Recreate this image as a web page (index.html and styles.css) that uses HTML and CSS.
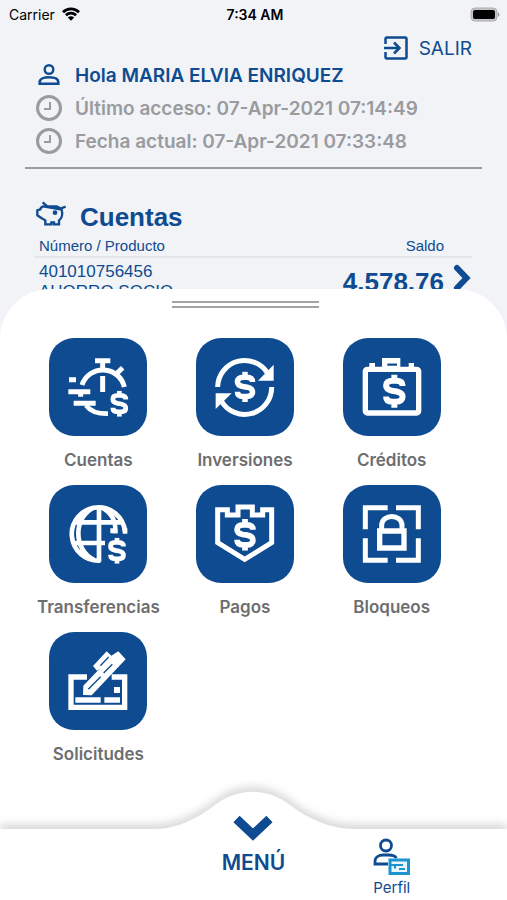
FILE: index.html
```html
<!DOCTYPE html>
<html lang="es">
<head>
<meta charset="utf-8">
<meta name="viewport" content="width=device-width, initial-scale=1">
<title>Banca móvil</title>
<link rel="stylesheet" href="styles.css">
</head>
<body>
<svg class="defs" aria-hidden="true">
  <symbol id="dollar" viewBox="-32 -44 64 88">
    <path d="M22-14C22-25 14-28 5-28H-5C-16-28-22-23-22-15S-16-3-6-1L6 1C16 3 22 7 22 15S16 28 5 28H-5C-14 28-22 25-22 14M0-44V-28M0 28V44" fill="none" stroke="#fff" stroke-width="16"/>
  </symbol>
  <symbol id="clock" viewBox="0 0 28 28">
    <circle cx="14" cy="14" r="11.5" fill="none" stroke="#999b9e" stroke-width="3"/>
    <path d="M15 8V15H9" fill="none" stroke="#999b9e" stroke-width="2"/>
  </symbol>
</svg>
<div class="app">
  <header class="status">
    <span class="carrier">Carrier
      <svg class="wifi" viewBox="0 0 18 14" aria-hidden="true"><path d="M1 5.2a11.5 11.5 0 0 1 16 0M3.9 8.3a7.3 7.3 0 0 1 10.2 0" fill="none" stroke="#000" stroke-width="2.8"/><path d="M9 13.8 5.8 10.6a4.6 4.6 0 0 1 6.4 0z"/></svg>
    </span>
    <span class="time">7:34 AM</span>
    <svg class="battery" viewBox="0 0 31 15" aria-hidden="true"><rect x="1" y="1" width="26" height="13" rx="4" fill="#c4c6c8" stroke="#aaa" stroke-width="1"/><rect x="3" y="3" width="22" height="9" rx="2"/><path d="M28 5q3 2.500 0 5z" fill="#999"/></svg>
  </header>

  <main class="summary">
    <button class="logout" type="button">
      <svg viewBox="0 0 24 24" aria-hidden="true"><path d="M1.500 8V3Q1.500 1.500 3 1.500H21Q22.500 1.500 22.500 3V21Q22.500 22.500 21 22.500H3Q1.500 22.500 1.500 21V16M0 12H15M10 6.500 15.500 12 10 17.500" fill="none" stroke="#0e4b90" stroke-width="2.500"/></svg>
      SALIR
    </button>
    <ul class="session">
      <li class="hello"><svg viewBox="0 0 28 28" aria-hidden="true"><circle cx="14" cy="8.500" r="4.300" fill="none" stroke="#0e4b90" stroke-width="2.400"/><path d="M4.700 22.800V21C4.700 17.500 9.500 16.300 14 16.300S23.300 17.500 23.300 21V22.800Z" fill="none" stroke="#0e4b90" stroke-width="2.600"/></svg>Hola MARIA ELVIA ENRIQUEZ</li>
      <li><svg aria-hidden="true"><use href="#clock"/></svg>Último acceso: 07-Apr-2021 07:14:49</li>
      <li><svg aria-hidden="true"><use href="#clock"/></svg>Fecha actual: 07-Apr-2021 07:33:48</li>
    </ul>
    <section class="accounts">
      <h1><svg viewBox="12 12 96 84" aria-hidden="true"><path d="M35 19 49 31H77C81 32 85 35 88 38L104 32M92 41C96 56 91 68 84 73V85H69V79H61V85H43V73L31 66 19 58V43L28 40C29 34 33 32 37 31Z" fill="none" stroke="#0e4b90" stroke-width="7"/><circle cx="72" cy="50" r="7" fill="#0e4b90"/></svg>Cuentas</h1>
      <table>
        <thead><tr><th>Número / Producto</th><th class="amount">Saldo</th><th class="go"></th></tr></thead>
        <tbody><tr>
          <td>401010756456<br>AHORRO SOCIO</td>
          <td class="amount">4.578.76</td>
          <td class="go"><button type="button" aria-label="Ver cuenta"><svg viewBox="0 0 18 28" aria-hidden="true"><path d="M4 4 13.500 14 4 24" fill="none" stroke="#0e4b90" stroke-width="6" stroke-linecap="round"/></svg></button></td>
        </tr></tbody>
      </table>
    </section>
  </main>

  <section class="sheet">
    <button class="grip" type="button" aria-label="Cerrar menú"></button>
    <div class="grid">
      <button type="button"><svg viewBox="30 24 294 294" aria-hidden="true">
        <path d="M129 165A66 66 0 0 1 256 171M191 138V186M191 92V118M168 92H214M234 130 251 113" fill="none" stroke="#fff" stroke-width="15"/>
        <path d="M90 149H111M88 185H154M125 190V200M104 220H170" fill="none" stroke="#fff" stroke-width="15"/>
        <path d="M141 226Q160 252 207 251" fill="none" stroke="#fff" stroke-width="14"/>
        <use href="#dollar" x="212" y="182" width="58" height="78"/></svg><span>Cuentas</span></button>
      <button type="button"><svg viewBox="32 24 294 294" aria-hidden="true">
        <path d="M97 171A81 81 0 0 1 247 130M259 171A81 81 0 0 1 108 213" fill="none" stroke="#fff" stroke-width="15"/>
        <path d="M265 104V152H218ZM91 190V237L139 190Z" fill="#fff"/>
        <use href="#dollar" x="146" y="124" width="66" height="93"/></svg><span>Inversiones</span></button>
      <button type="button"><svg viewBox="34 24 294 294" aria-hidden="true">
        <rect x="101" y="118" width="160" height="131" rx="6" fill="none" stroke="#fff" stroke-width="16"/>
        <path d="M151 84H206V118H151ZM113 99H130V117H113ZM231 99H247V117H231Z" fill="#fff"/>
        <path d="M167 104H196" stroke="#0e4b90" stroke-width="7"/>
        <use href="#dollar" x="152" y="132" width="72" height="103"/></svg><span>Créditos</span></button>
      <button type="button"><svg viewBox="30 20 294 294" aria-hidden="true">
        <path d="M184 247A80 80 0 1 1 258 160M180 85V250M166 87C102 115 102 215 166 245M188 87C214 100 232 126 229 165M108 132H246M98 194H198" fill="none" stroke="#fff" stroke-width="14"/>
        <path d="M221 150V165M258 150V166" stroke="#fff" stroke-width="14"/>
        <use href="#dollar" x="202" y="178" width="64" height="78"/></svg><span>Transferencias</span></button>
      <button type="button"><svg viewBox="32 20 294 294" aria-hidden="true">
        <path d="M97 94H126V110H158V86H201V110H232V94H259V193L178 243 97 193Z" fill="none" stroke="#fff" stroke-width="15"/>
        <use href="#dollar" x="141" y="122" width="76" height="95"/></svg><span>Pagos</span></button>
      <button type="button"><svg viewBox="34 20 294 294" aria-hidden="true">
        <path d="M168 88H101V153M193 88H260V153M101 180V246H168M260 180V246H193" fill="none" stroke="#fff" stroke-width="15"/>
        <path d="M144 158H217V209H144Z" fill="none" stroke="#fff" stroke-width="16"/><path d="M150 156V141C150 106 211 106 211 141V156" fill="none" stroke="#fff" stroke-width="15"/></svg><span>Bloqueos</span></button>
      <button type="button"><svg viewBox="30 22 294 294" aria-hidden="true">
        <path d="M144 157H96V248H257V157H218" fill="none" stroke="#fff" stroke-width="16"/>
        <path d="M109 226H185M196 226H243" stroke="#fff" stroke-width="17"/><path d="M225 196H243" stroke="#fff" stroke-width="18"/>
        <path d="M132 211 133 183 183 131 174 138 162 124 203 80 217 93 238 80 260 104 158 212Z" fill="#fff"/>
        <path d="M148 194 185 156M194 145 220 119M184 123 209 97" fill="none" stroke="#0e4b90" stroke-width="4"/></svg><span>Solicitudes</span></button>
    </div>
  </section>

  <nav class="tabs">
    <svg class="curve" aria-hidden="true"><svg x="50%" overflow="visible"><path d="M-2000 49H-99C-76 49-56 38-40 26-16 7 14 7 38 26 54 38 76 49 101 49H2000V140H-2000Z" fill="#fff"/></svg></svg>
    <button class="menu" type="button"><svg viewBox="0 0 40 26" aria-hidden="true"><path d="M3.500 4 20 19.500 36.500 4" fill="none" stroke="#0e4b90" stroke-width="9"/></svg>MENÚ</button>
    <a class="profile" href="#perfil"><svg viewBox="0 0 37 37" aria-hidden="true"><circle cx="13" cy="7.500" r="5.500" fill="none" stroke="#0e4b90" stroke-width="2.800"/><path d="M15 26H2V23.500C2 19 6 17 10 17H16C19.500 17 22 18 23.500 20" fill="none" stroke="#0e4b90" stroke-width="2.800"/><rect x="17" y="22" width="18.500" height="13.500" fill="#eaf6fc" stroke="#1b94cf" stroke-width="3"/><path d="M17 27H30M22 26V30.500M26 31H32" fill="none" stroke="#1b94cf" stroke-width="2.200"/></svg>Perfil</a>
  </nav>
</div>
</body>
</html>
```
FILE: styles.css
```css
* { box-sizing: border-box; }
body {
  margin: 0;
  background: #f1f3f7;
  color: #0e4b90;
  font-family: Inter, "Liberation Sans", sans-serif;
}
button {
  padding: 0;
  border: 0;
  background: none;
  color: inherit;
  font: inherit;
  cursor: pointer;
}
svg { display: block; flex: none; }
.defs { position: absolute; width: 0; height: 0; }
.app {
  display: flex;
  flex-direction: column;
  min-height: 100vh;
}

.status {
  display: grid;
  grid-template-columns: 1fr auto 1fr;
  align-items: center;
  height: 28px;
  padding: 0 6px 0 9px;
  color: #000;
  font-size: 14px;
}
.carrier { display: flex; align-items: center; gap: 7px; }
.wifi { width: 18px; height: 14px; }
.time { font-weight: 600; }
.battery { width: 31px; height: 15px; justify-self: end; }

.summary { padding: 9px 25px 0; }
.logout {
  display: flex;
  align-items: center;
  gap: 11px;
  height: 22px;
  margin: 0 10px 0 auto;
  font-size: 19px;
}
.logout svg { width: 24px; height: 24px; }
.session {
  margin: 0;
  padding: 0 10px 9px;
  border-bottom: 2px solid #999b9e;
  list-style: none;
  color: #999b9e;
  font-size: 19px;
  font-weight: 600;
}
.session li {
  display: flex;
  align-items: center;
  gap: 12px;
  height: 32px;
  margin-bottom: 1px;
}
.session svg { width: 28px; height: 28px; }
.session .hello { color: #0e4b90; }

.accounts {
  padding: 30px 10px 0;
  font-family: "Liberation Sans", Arial, sans-serif;
}
h1 {
  display: flex;
  align-items: center;
  gap: 13px;
  height: 36px;
  margin: 0;
  font-size: 26px;
}
h1 svg { width: 32px; height: 28px; margin-bottom: 6px; }
table { width: 100%; border-collapse: collapse; }
th {
  height: 22px;
  padding: 0 4px;
  border-bottom: 2px solid #e3e5e9;
  text-align: left;
  font-size: 15px;
  font-weight: 400;
}
td {
  padding: 4px;
  vertical-align: top;
  font-size: 17px;
  line-height: 20px;
}
.amount { padding-right: 0; text-align: right; }
td.amount { font-size: 26px; font-weight: 700; line-height: 40px; }
.go { width: 28px; padding: 6px 0 0 9px; }
.go svg { width: 18px; height: 28px; }

.sheet {
  flex: 1;
  margin-top: -17px;
  padding: 12px 42px 0 25px;
  border-radius: 50px 50px 0 0;
  background: #fff;
}
.grip {
  display: block;
  width: 147px;
  height: 7px;
  margin: 0 auto 30px;
  border-top: 2px solid #a2a4a2;
  border-bottom: 2px solid #a2a4a2;
}
.grid {
  display: grid;
  grid-template-columns: repeat(3, 1fr);
  row-gap: 13px;
}
.grid button {
  display: flex;
  flex-direction: column;
  align-items: center;
  gap: 12px;
  color: #6d6e70;
  font-size: 17px;
  font-weight: 600;
  line-height: 24px;
}
.grid svg {
  width: 98px;
  height: 98px;
  border-radius: 25px;
  background: #0e4b90;
}

.tabs {
  position: relative;
  display: grid;
  grid-template-columns: repeat(11, 1fr);
  height: 120px;
  background: #fff;
}
.curve {
  position: absolute;
  top: 0;
  left: 0;
  width: 100%;
  height: 100%;
  filter: drop-shadow(0 -5px 4px #00000026);
}
.tabs button, .tabs a {
  position: relative;
  display: flex;
  flex-direction: column;
  align-items: center;
  color: #0e4b90;
  text-decoration: none;
}
.menu {
  grid-column: 5 / 8;
  padding-top: 35px;
  gap: 9px;
  line-height: 26px;
}
.tabs .menu { padding-top: 35px; font-size: 21px; font-weight: 600; line-height: 26px; }
.menu svg { width: 40px; height: 26px; }
.profile {
  grid-column: 8 / 11;
  padding-top: 58px;
  gap: 4px;
  font-size: 15px;
  line-height: 18px;
}
.profile svg { width: 37px; height: 37px; }
```
